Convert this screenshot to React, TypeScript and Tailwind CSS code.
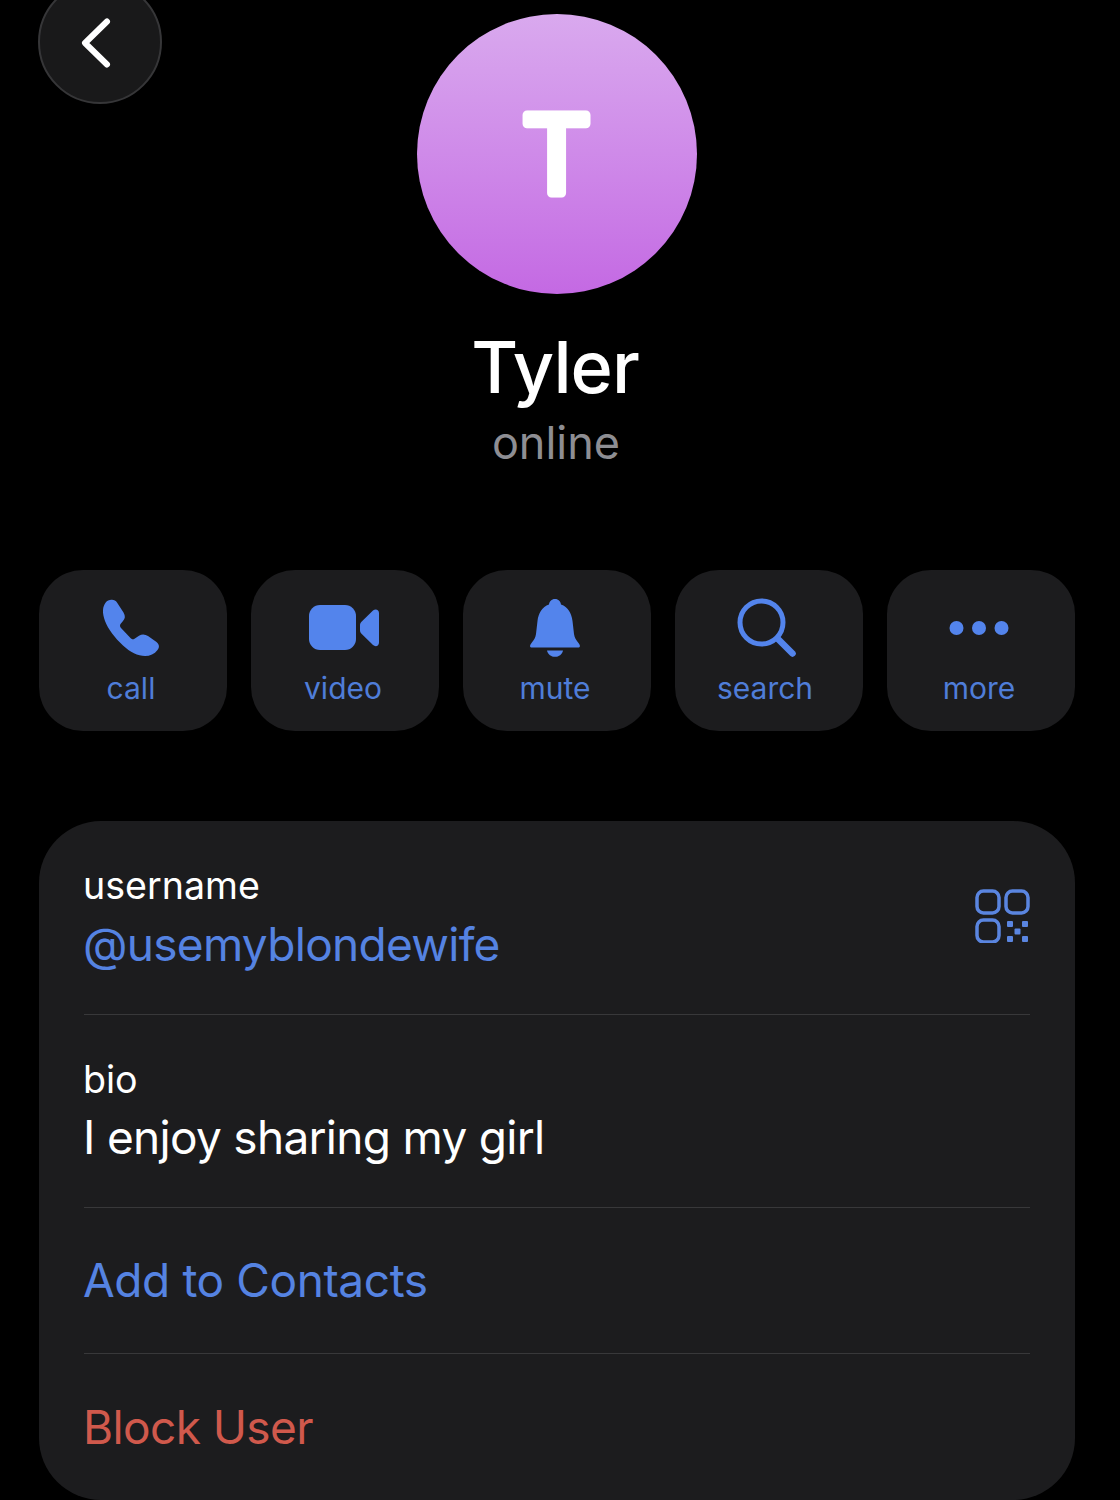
const blue = "#5384ec";

function Phone() {
  return (
    <svg width="60" height="60" viewBox="0 0 60 60" fill={blue}>
      <path d="M2 12C2.5 6 6 2 9 2C12 1.4 14.5 2 16 4.5L22.5 14.5C24.5 18 24.3 20.5 22 23L19.5 26C18.7 27.3 18.9 28.5 20 30L29 39.5C30.5 41.3 32 41.8 33.5 40.7L38 37.7C41 35.8 44 36 47 38L55.5 44C58.5 46.5 58.6 49.5 56.5 52C53.5 56 49 58 44 58C37 58 29 54 22 47.5C14 40 7 31 4 23C2.6 19 1.8 15.5 2 12Z" />
    </svg>
  );
}

function Video() {
  return (
    <svg width="72" height="46" viewBox="0 0 72 46" fill={blue}>
      <rect x="0" y="0" width="47" height="45" rx="11" />
      <path d="M51 20.5C51 18.5 51.5 17.5 53 16.2L64 5.5C66.5 3.3 70 4.5 70 8V37.5C70 41 66.5 42.3 64 40L53 29.2C51.5 27.8 51 27 51 25Z" />
    </svg>
  );
}

function Bell() {
  return (
    <svg width="52" height="58" viewBox="0 0 52 58" fill={blue}>
      <path d="M26 0C29.5 0 31.8 2.6 32 5.5C39 8 42.5 14 43.5 22L45 35C45.5 38.5 47 41 49.5 44C51.5 46.5 51.5 48.5 49 48.5H3C0.5 48.5 0.5 46.5 2.5 44C5 41 6.5 38.5 7 35L8.5 22C9.5 14 13 8 20 5.5C20.2 2.6 22.5 0 26 0Z" />
      <path d="M18 51.5H34C33 55.5 30 57.8 26 57.8C22 57.8 19 55.5 18 51.5Z" />
    </svg>
  );
}

function SearchGlyph() {
  return (
    <svg width="60" height="60" viewBox="0 0 60 60" fill="none" stroke={blue} strokeLinecap="round">
      <circle cx="24.5" cy="24.5" r="21.5" strokeWidth="5" />
      <path d="M41 41L55.5 55.5" strokeWidth="6.5" />
    </svg>
  );
}

function Dots() {
  return (
    <svg width="60" height="16" viewBox="0 0 60 16" fill={blue}>
      <circle cx="7.5" cy="8" r="7" />
      <circle cx="30" cy="8" r="7" />
      <circle cx="52.5" cy="8" r="7" />
    </svg>
  );
}

function Qr() {
  return (
    <svg width="56" height="54" viewBox="0 0 56 54" fill="none" stroke="#5a85e0" strokeWidth="3.5">
      <rect x="2" y="2" width="22" height="22" rx="6.5" />
      <rect x="31" y="2" width="22" height="22" rx="6.5" />
      <rect x="2" y="31" width="22" height="22" rx="6.5" />
      <g fill="#5a85e0" stroke="none">
        <rect x="32" y="32" width="6" height="6" rx="1" />
        <rect x="47" y="32" width="6" height="6" rx="1" />
        <rect x="39.5" y="39.5" width="6" height="6" rx="1" />
        <rect x="32" y="47" width="6" height="6" rx="1" />
        <rect x="47" y="47" width="6" height="6" rx="1" />
      </g>
    </svg>
  );
}

const actions = [
  { label: "call", icon: <Phone />, iconPad: "pr-[4px]", labelPad: "pr-[4px]" },
  { label: "video", icon: <Video />, iconPad: "pr-0", labelPad: "pr-[4px]" },
  { label: "mute", icon: <Bell />, iconPad: "pr-[4px]", labelPad: "pr-[4px]" },
  { label: "search", icon: <SearchGlyph />, iconPad: "pr-[4px]", labelPad: "pr-[8px]" },
  { label: "more", icon: <Dots />, iconPad: "pr-[4px]", labelPad: "pr-[4px]" },
];

export default function App() {
  return (
    <div className="relative h-[1500px] w-[1120px] overflow-hidden bg-black font-['Inter',sans-serif]">
      <button className="absolute left-[38px] top-[-20px] flex h-[124px] w-[124px] items-center justify-center rounded-full border-2 border-[#363638] bg-[#19191a]">
        <svg width="40" height="60" viewBox="0 0 40 60" fill="none" stroke="#ffffff" strokeWidth="6" strokeLinecap="round" strokeLinejoin="round" className="mr-[10px] mt-[5px]">
          <path d="M32 6.5L10 28L32 49.5" />
        </svg>
      </button>

      <div className="ml-[39px] flex w-[1036px] flex-col items-center pt-[14px]">
        <div className="flex h-[280px] w-[280px] items-center justify-center rounded-full bg-gradient-to-b from-[#d9a9ee] to-[#c469e3]">
          <svg width="280" height="280" viewBox="0 0 280 280">
            <text x="139.5" y="178.5" textAnchor="middle" fontFamily="Inter, sans-serif" fontSize="107" fontWeight="400" fill="#ffffff" stroke="#ffffff" strokeWidth="9" strokeLinejoin="round">T</text>
          </svg>
        </div>
        <h1 className="mt-[30px] pr-[4px] text-[72px] font-medium leading-[86px] tracking-[-1px] text-white">Tyler</h1>
        <p className="mt-[5px] pr-[2px] text-[45px] leading-[56px] text-[#8e8e93]">online</p>

        <div className="mt-[99px] flex w-full justify-between">
          {actions.map((a) => (
            <div key={a.label} className="flex h-[161px] w-[188px] flex-col items-center rounded-[44px] bg-[#1c1c1e]">
              <div className={`flex h-[88px] w-full items-center justify-center pt-[28px] ${a.iconPad}`}>{a.icon}</div>
              <span className={`mt-[11px] text-[30px] leading-[38px] text-[#4f7dd8] ${a.labelPad}`}>{a.label}</span>
            </div>
          ))}
        </div>

        <div className="mt-[90px] w-full rounded-[62px] bg-[#1c1c1e] pl-[45px] pr-[45px]">
          <div className="flex h-[194px] items-start justify-between border-b border-[#38383a] pt-[42px]">
            <div className="-ml-px">
              <div className="text-[37.6px] leading-[46px] text-white">username</div>
              <div className="mt-[5px] text-[46px] leading-[60px] tracking-[-0.7px] text-[#5583e2]">@usemyblondewife</div>
            </div>
            <div className="-mr-px mt-[26px]"><Qr /></div>
          </div>
          <div className="h-[193px] border-b border-[#38383a] pt-[42px]">
            <div className="-ml-px">
              <div className="text-[37.6px] leading-[46px] text-white">bio</div>
              <div className="mt-[4px] text-[46px] leading-[60px] tracking-[-0.7px] text-white">I enjoy sharing my girl</div>
            </div>
          </div>
          <div className="flex h-[146px] items-center border-b border-[#38383a] text-[46px] tracking-[-0.4px] text-[#5583e2]"><span className="-ml-px">Add to Contacts</span></div>
          <div className="flex h-[146px] items-center text-[46px] tracking-[-0.6px] text-[#d0594c]"><span className="-ml-px">Block User</span></div>
        </div>
      </div>
    </div>
  );
}
